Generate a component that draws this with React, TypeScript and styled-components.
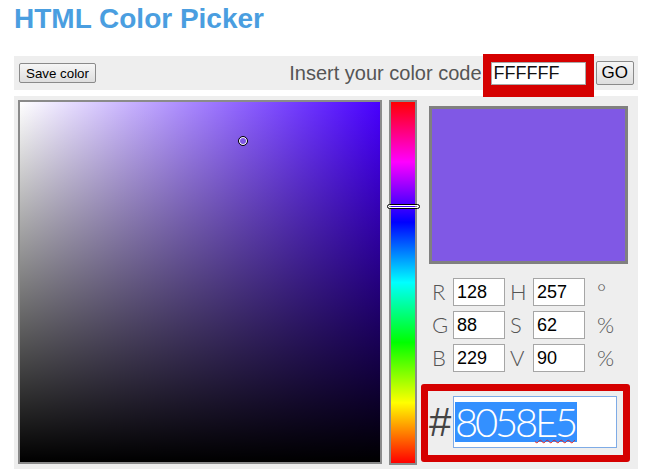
import { Fragment } from 'react';
import styled, { createGlobalStyle } from 'styled-components';

const GlobalStyle = createGlobalStyle`
  body {
    margin: 0;
    background: #ffffff;
    font-family: "Liberation Sans", Arial, sans-serif;
  }
`;

const Page = styled.div`
  width: 624px;
  padding-left: 14px;
`;

const Title = styled.h1`
  margin: 0;
  padding-top: 3px;
  height: 32px;
  line-height: 32px;
  font-size: 28px;
  font-weight: bold;
  color: #4a9ee0;
  margin-bottom: 21px;
`;

const Toolbar = styled.div`
  display: flex;
  align-items: center;
  height: 34px;
  padding: 0 4px 0 5px;
  background: #eeeeee;
`;

const Button = styled.button<{ $big?: boolean }>`
  height: ${p => (p.$big ? '24px' : '20px')};
  padding: 0 ${p => (p.$big ? '5px' : '6px')};
  font-family: "Liberation Sans", Arial, sans-serif;
  font-size: ${p => (p.$big ? '17px' : '13.33px')};
  color: #000;
  border: 1px solid #8a8a8a;
  border-radius: 2px;
  background: linear-gradient(#f6f6f6, #dedede);
`;

const CodeLabel = styled.span`
  margin-left: auto;
  font-size: 20px;
  color: #555555;
  margin-right: 9px;
`;

const CodeInput = styled.input`
  box-sizing: border-box;
  width: 95px;
  height: 23px;
  padding: 0 2px;
  border: 1px solid #a9a9a9;
  font-family: "Liberation Sans", Arial, sans-serif;
  font-size: 18px;
  color: #111;
  box-shadow: 0 0 0 8px #d50000, 0 4px 0 8px #d50000;
  border-radius: 0;
  outline: none;
  margin-right: 10px;
`;

const Panel = styled.div`
  display: flex;
  margin-top: 6px;
  padding: 4px 4px 12px 4px;
  background: #eeeeee;
`;

const SatBox = styled.div<{ $hue: string }>`
  position: relative;
  box-sizing: border-box;
  width: 364px;
  height: 364px;
  border: 2px solid #8a8a8a;
  background: linear-gradient(to bottom, rgba(0, 0, 0, 0), #000),
    linear-gradient(to right, #ffffff, ${p => p.$hue});
`;

const Marker = styled.div`
  position: absolute;
  width: 8px;
  height: 8px;
  border: 1px solid #000;
  border-radius: 50%;
  box-shadow: inset 0 0 0 1px #fff;
  transform: translate(-5px, -5px);
`;

const HueBar = styled.div`
  position: relative;
  box-sizing: border-box;
  width: 28px;
  height: 365px;
  margin-left: 7px;
  border: 2px solid #8a8a8a;
  background: linear-gradient(
    to bottom,
    #ff0000 0%,
    #ff00ff 16.6%,
    #0000ff 33.3%,
    #00ffff 50%,
    #00ff00 66.6%,
    #ffff00 83.3%,
    #ff0000 100%
  );
`;

const HueThumb = styled.div`
  position: absolute;
  left: -4px;
  width: 31px;
  height: 3px;
  border: 1px solid #000;
  border-radius: 3px;
  box-shadow: inset 0 0 0 1px #fff;
`;

const Side = styled.div`
  display: flex;
  flex-direction: column;
  padding-left: 4px;
  width: 212px;
`;

const Preview = styled.div<{ $color: string }>`
  box-sizing: border-box;
  width: 199px;
  height: 158px;
  margin: 6px 0 0 8px;
  border: 3px solid #808080;
  background: ${p => p.$color};
`;

const Fields = styled.div`
  display: grid;
  grid-template-columns: 21px 52px 28px 52px 24px;
  row-gap: 5px;
  margin: 14px 0 12px 11px;
  align-items: center;
`;

const ThinLabel = styled.span<{ $unit?: boolean; $pad?: number }>`
  font-family: Lato, "DejaVu Sans", sans-serif;
  font-weight: 300;
  font-size: 22px;
  color: #555555;
  line-height: 28px;
  padding-left: ${p => (p.$unit ? 12 : p.$pad || 0)}px;
  ${p => (p.$unit ? 'align-self: start;' : '')}
`;

const NumField = styled.input`
  box-sizing: border-box;
  width: 52px;
  height: 28px;
  padding: 0 3px;
  border: 1px solid #a6a6a6;
  background: #fff;
  font-family: "Liberation Sans", Arial, sans-serif;
  font-size: 18px;
  color: #000;
  outline: none;
  border-radius: 0;
`;

const HexBox = styled.div`
  display: flex;
  align-items: center;
  box-sizing: border-box;
  width: 209px;
  height: 78px;
  padding: 5px 0 7px 1px;
  border: 7px solid #d50000;
  border-radius: 3px;
`;

const Hash = styled.span`
  width: 24px;
  font-size: 40px;
  color: #444444;
`;

const HexField = styled.div`
  box-sizing: border-box;
  width: 164px;
  height: 52px;
  padding: 5px 1px;
  border: 1px solid #7eabe6;
  background: #ffffff;
`;

const Selected = styled.span`
  display: inline-block;
  height: 40px;
  line-height: 40px;
  background: #3390ff;
  color: #ffffff;
  font-family: Lato, "DejaVu Sans", sans-serif;
  font-weight: 300;
  font-size: 40px;
  letter-spacing: -3.2px;
  padding-right: 2px;
`;

const Misspelt = styled.span`
  text-decoration: underline wavy #e02020;
  text-decoration-thickness: 1px;
  text-underline-offset: 2px;
`;

const hsv = { h: 257, s: 62, v: 90 };
const rgb = { r: 128, g: 88, b: 229 };

const rows = [
  { a: 'R', av: rgb.r, b: 'H', bv: hsv.h, unit: '°' },
  { a: 'G', av: rgb.g, b: 'S', bv: hsv.s, unit: '%' },
  { a: 'B', av: rgb.b, b: 'V', bv: hsv.v, unit: '%' },
];

export default function App() {
  const hueColor = 'rgb(72, 0, 255)';
  // marker place inside the 360px square, from saturation / value
  const markerX = Math.round((hsv.s / 100) * 360);
  const markerY = Math.round((1 - hsv.v / 100) * 360) + 3;
  const hueY = Math.round((1 - hsv.h / 360) * 361) - 1;

  return (
    <Page>
      <GlobalStyle />
      <Title>HTML Color Picker</Title>
      <Toolbar>
        <Button>Save color</Button>
        <CodeLabel>Insert your color code</CodeLabel>
        <CodeInput defaultValue="FFFFFF" />
        <Button $big>GO</Button>
      </Toolbar>
      <Panel>
        <SatBox $hue={hueColor}>
          <Marker style={{ left: markerX, top: markerY }} />
        </SatBox>
        <HueBar>
          <HueThumb style={{ top: hueY }} />
        </HueBar>
        <Side>
          <Preview $color="#8058E5" />
          <Fields>
            {rows.map(r => (
              <Fragment key={r.a}>
                <ThinLabel>{r.a}</ThinLabel>
                <NumField defaultValue={r.av} />
                <ThinLabel $pad={5}>{r.b}</ThinLabel>
                <NumField defaultValue={r.bv} />
                <ThinLabel $unit>{r.unit}</ThinLabel>
              </Fragment>
            ))}
          </Fields>
          <HexBox>
            <Hash>#</Hash>
            <HexField>
              <Selected>
                8058<Misspelt>E5</Misspelt>
              </Selected>
            </HexField>
          </HexBox>
        </Side>
      </Panel>
    </Page>
  );
}
